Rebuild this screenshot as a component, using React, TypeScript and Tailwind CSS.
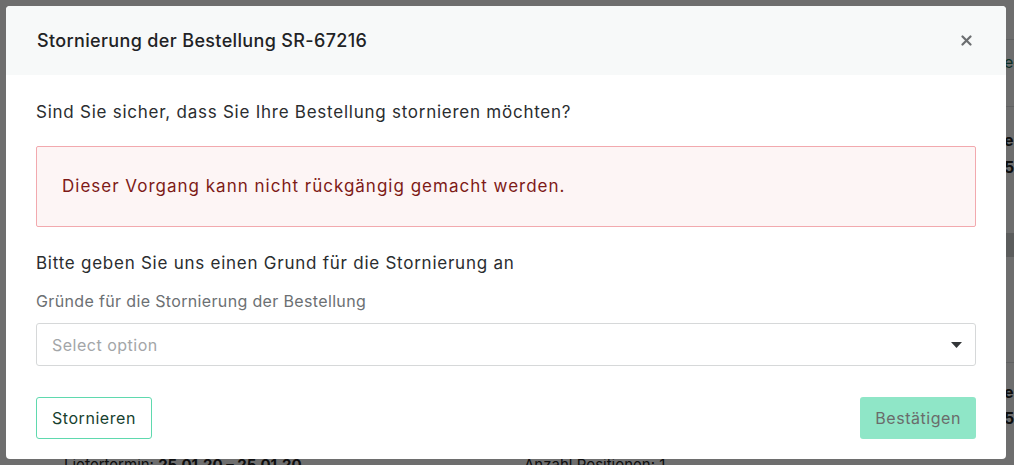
import { useState } from 'react'

function CloseIcon() {
  return (
    <svg width="11" height="11" viewBox="0 0 11 11" fill="none">
      <path d="M1.5 1.5l8 8M9.5 1.5l-8 8" stroke="#6b6e70" strokeWidth="2.2" strokeLinecap="round" />
    </svg>
  )
}

function Caret() {
  return (
    <svg width="11" height="6" viewBox="0 0 11 6">
      <path d="M0 0h11L5.5 6z" fill="#333638" />
    </svg>
  )
}

// page behind the overlay, only slivers of it show around the modal
function BackgroundPage() {
  return (
    <div className="h-[465px] w-full bg-[#f3f4f4] flex">
      <div className="w-[1004px] shrink-0 flex flex-col justify-end">
        <div className="flex h-[8px] text-[15px] text-[#222] leading-none">
          <span className="pl-[64px] w-[524px]">
            Liefertermin: <b>25.01.20 – 25.01.20</b>
          </span>
          <span>Anzahl Positionen: 1</span>
        </div>
      </div>
      <div className="w-[200px] shrink-0 flex flex-col text-[16px] leading-none">
        <div className="h-[40px] border-b border-[#d5d8d9]" />
        <div className="h-[44px] flex items-center text-[#1d6b55]">ecken</div>
        <div className="h-[23px] border-b border-[#d5d8d9]" />
        <div className="mt-[25px] font-bold text-[#222]">es</div>
        <div className="mt-[11px] font-bold text-[#222]">5</div>
        <div className="mt-[58px] h-[24px] bg-[#c9cccd]" />
        <div className="mt-[105px] border-t border-[#d5d8d9]" />
        <div className="mt-[21px] font-bold text-[#222]">es</div>
        <div className="mt-[10px] font-bold text-[#222]">52</div>
      </div>
    </div>
  )
}

export default function App() {
  const [reason, setReason] = useState('')

  return (
    <div className="relative h-[465px] w-full overflow-hidden" style={{ fontFamily: 'Inter, "Noto Sans", sans-serif' }}>
      <BackgroundPage />

      {/* Overlay */}
      <div className="absolute inset-0 bg-black/55" />

      {/* Modal */}
      <div className="absolute left-[6px] top-[6px] w-[1000px] h-[453px] bg-white rounded-[4px] overflow-hidden flex flex-col">
        <div className="h-[69px] shrink-0 bg-[#f7f9f9] flex items-center justify-between pl-[31px] pr-[33px]">
          <div className="text-[18px] tracking-[0.35px] text-[#1f2325] font-medium">Stornierung der Bestellung SR-67216</div>
          <button className="w-[14px] h-[14px] flex items-center justify-center">
            <CloseIcon />
          </button>
        </div>

        <div className="px-[30px] pt-[25px] flex flex-col">
          <p className="text-[17px] tracking-[0.75px] text-[#2a2d2f] leading-[24px]">
            Sind Sie sicher, dass Sie Ihre Bestellung stornieren möchten?
          </p>

          <div className="mt-[22px] h-[81px] border border-[#f2a9ae] bg-[#fdf5f5] rounded-[2px] flex items-center px-[25px]">
            <span className="text-[17px] tracking-[1px] text-[#7d1a17]">
              Dieser Vorgang kann nicht rückgängig gemacht werden.
            </span>
          </div>

          <p className="mt-[24px] text-[17px] tracking-[0.75px] text-[#2a2d2f] leading-[24px]">
            Bitte geben Sie uns einen Grund für die Stornierung an
          </p>

          <label className="mt-[15px] text-[16px] tracking-[0.35px] text-[#6c7073] leading-[22px]">
            Gründe für die Stornierung der Bestellung
          </label>

          <div className="mt-[11px] h-[43px] border border-[#d6d8d9] rounded-[3px] flex items-center justify-between pl-[15px] pr-[13px]">
            <span className="text-[16px] tracking-[0.5px] text-[#a3a6a8]">{reason || 'Select option'}</span>
            <button onClick={() => setReason('')}>
              <Caret />
            </button>
          </div>

          <div className="mt-[31px] flex items-center justify-between">
            <button className="h-[42px] px-[15px] border border-[#5fd9ae] rounded-[3px] text-[16px] tracking-[0.55px] text-[#173f2f] bg-white">
              Stornieren
            </button>
            <button className="h-[42px] px-[15px] rounded-[3px] text-[16px] tracking-[0.55px] text-[#6a6c6b] bg-[#8fe6c7]">
              Bestätigen
            </button>
          </div>
        </div>
      </div>
    </div>
  )
}
